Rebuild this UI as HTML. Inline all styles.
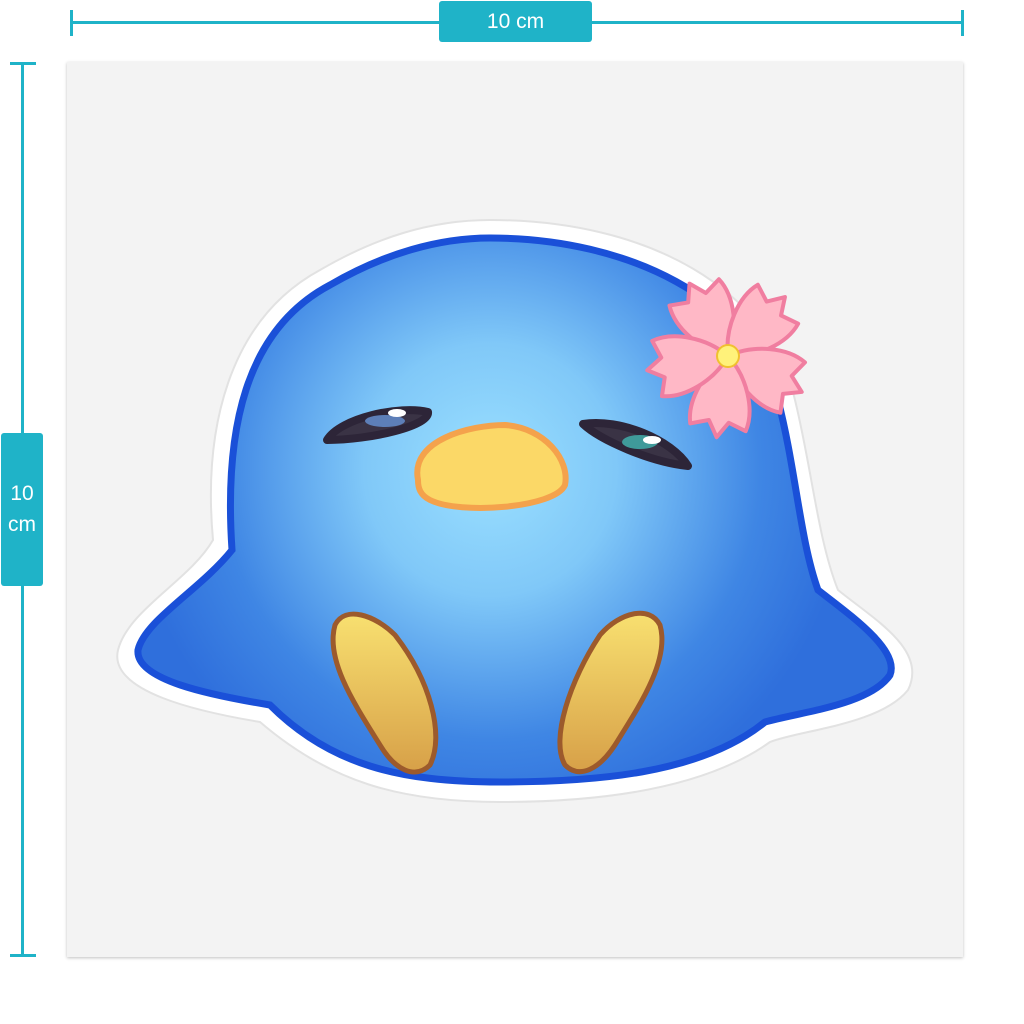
<!DOCTYPE html>
<html><head><style>
body{margin:0;width:1024px;height:1024px;background:#fff;position:relative;overflow:hidden;font-family:"Liberation Sans",sans-serif}
.card{position:absolute;left:67px;top:62px;width:896px;height:895px;background:#f3f3f3;box-shadow:0 1px 3px rgba(0,0,0,.25)}
.lbl{position:absolute;background:#1fb3c8;color:#fff;border-radius:3px;text-align:center}
</style></head><body>
<div style="position:absolute;left:70px;top:21px;width:894px;height:3px;background:#1fb3c8"></div>
<div style="position:absolute;left:70px;top:10px;width:3px;height:26px;background:#1fb3c8"></div>
<div style="position:absolute;left:961px;top:10px;width:3px;height:26px;background:#1fb3c8"></div>
<div class="lbl" style="left:439px;top:1px;width:153px;height:41px;line-height:41px;font-size:21px">10 cm</div>
<div style="position:absolute;left:21px;top:63px;width:3px;height:894px;background:#1fb3c8"></div>
<div style="position:absolute;left:10px;top:62px;width:26px;height:3px;background:#1fb3c8"></div>
<div style="position:absolute;left:10px;top:954px;width:26px;height:3px;background:#1fb3c8"></div>
<div class="lbl" style="left:1px;top:433px;width:42px;height:153px;font-size:21px;line-height:31px;padding-top:45px;box-sizing:border-box">10<br>cm</div>
<div class="card"></div>
<svg style="position:absolute;left:0;top:0" width="1024" height="1024">
<defs>
<radialGradient id="g" cx="490" cy="470" r="360" gradientUnits="userSpaceOnUse">
<stop offset="0" stop-color="#9be0ff"/><stop offset=".35" stop-color="#80c8f8"/><stop offset=".75" stop-color="#3f86e4"/><stop offset="1" stop-color="#2f6fdc"/></radialGradient>
<linearGradient id="f" x1="0" y1="0" x2="0" y2="1"><stop offset="0" stop-color="#f8e070"/><stop offset="1" stop-color="#d7a048"/></linearGradient>
</defs>
<path d="M490 220 C650 220 770 290 795 400 C812 470 818 540 838 590 C875 620 928 650 908 690 C880 725 800 730 770 742 C700 792 590 802 500 802 C400 802 330 782 260 722 C200 712 108 692 118 650 C128 610 190 580 213 540 C203 430 228 320 320 270 C375 238 430 220 490 220Z" fill="#fff" stroke="#e2e2e2" stroke-width="2"/>
<path d="M490 238 C630 238 750 300 778 400 C796 470 800 540 818 590 C850 615 900 650 890 675 C870 705 800 712 765 722 C700 775 590 782 500 782 C400 782 330 765 270 705 C210 695 135 680 138 650 C145 620 200 590 232 550 C224 430 245 330 330 285 C385 253 440 238 490 238Z" fill="url(#g)" stroke="#1a50d8" stroke-width="7"/>
<path d="M327 440 C340 418 400 405 428 412 C430 426 370 440 327 440Z" fill="#3a3345" stroke="#2d2538" stroke-width="8" stroke-linejoin="round"/>
<ellipse cx="385" cy="421" rx="20" ry="6" fill="#5d7fb8"/><ellipse cx="397" cy="413" rx="9" ry="4" fill="#fff"/>
<path d="M583 424 C620 418 672 440 688 466 C650 462 600 440 583 424Z" fill="#3a3345" stroke="#2d2538" stroke-width="8" stroke-linejoin="round"/>
<ellipse cx="640" cy="442" rx="18" ry="7" fill="#3f9a9a"/><ellipse cx="652" cy="440" rx="9" ry="4" fill="#fff"/>
<path d="M418 480 C410 440 470 425 505 425 C545 428 570 460 565 485 C555 508 460 515 430 500 C420 495 418 488 418 480Z" fill="#fbd867" stroke="#f4a24c" stroke-width="6"/>
<path d="M335 625 C345 605 375 615 395 635 C430 680 445 735 430 765 C415 780 395 770 380 745 C355 705 325 660 335 625Z" fill="url(#f)" stroke="#9c5a2c" stroke-width="5"/>
<path d="M660 625 C650 605 620 612 600 635 C570 680 550 740 565 765 C580 780 600 768 615 745 C640 705 670 660 660 625Z" fill="url(#f)" stroke="#9c5a2c" stroke-width="5"/>
<g transform="translate(728,356)" fill="#ffb8c6" stroke="#f07ea0" stroke-width="4" stroke-linejoin="round">
<g id="p"><path transform="rotate(-28)" d="M0 0 C-22 -18 -34 -50 -28 -72 L-10 -66 L0 -82 L10 -66 L28 -72 C34 -50 22 -18 0 0Z"/></g>
<use href="#p" transform="rotate(72)"/>
<use href="#p" transform="rotate(144)"/>
<use href="#p" transform="rotate(216)"/>
<use href="#p" transform="rotate(288)"/>
<circle r="11" fill="#fff27a" stroke="#f0c030" stroke-width="2"/>
</g>
</svg>
</body></html>
